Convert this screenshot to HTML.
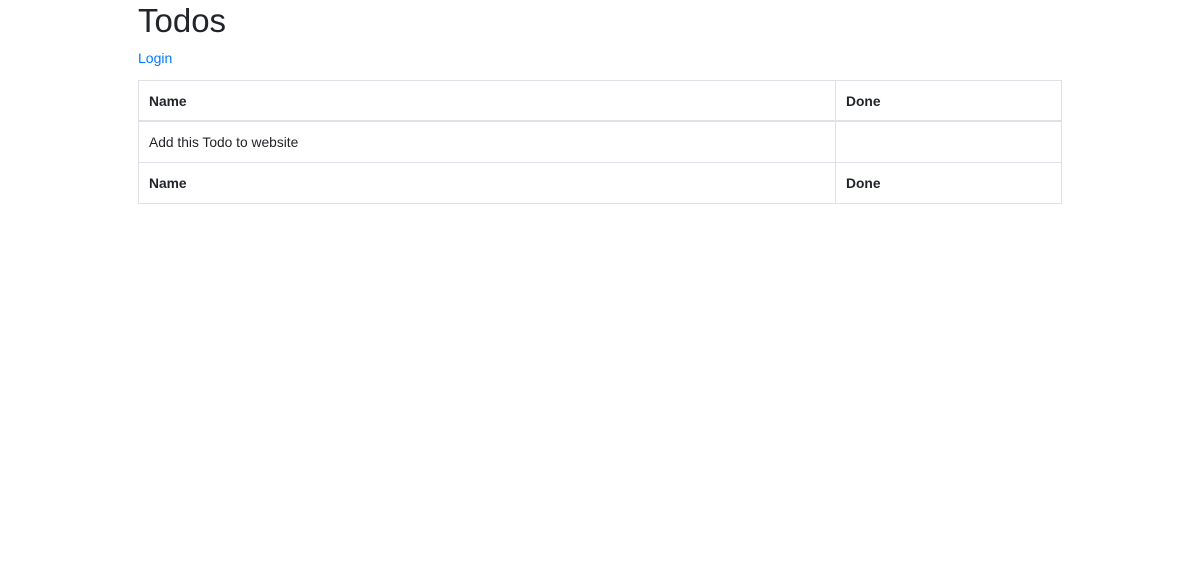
<!DOCTYPE html>
<html><head><meta charset="utf-8"><style>
body{margin:0;background:#fff;font-family:"Liberation Sans",Arial,sans-serif;color:#212529;font-size:14px;line-height:1.5}
.c{position:absolute;left:138px;width:924px;top:0}
h1{margin:0;font-size:33px;font-weight:400;line-height:42px;height:44px}
a{color:#007bff;text-decoration:none;display:block;margin-top:2px;font-size:14px;height:34px;line-height:24px}
table{border-collapse:collapse;width:924px;font-size:13.8px}
td,th{border:1px solid #dee2e6;padding:3px 10px 0;height:37px;text-align:left}
thead th{border-bottom:2px solid #dee2e6;height:36px}
th{font-weight:700}
</style></head><body><div class="c">
<h1>Todos</h1>
<a>Login</a>
<table><thead><tr><th style="width:676px">Name</th><th>Done</th></tr></thead>
<tbody><tr><td>Add this Todo to website</td><td></td></tr></tbody>
<tfoot><tr><th>Name</th><th>Done</th></tr></tfoot></table>
</div></body></html>
